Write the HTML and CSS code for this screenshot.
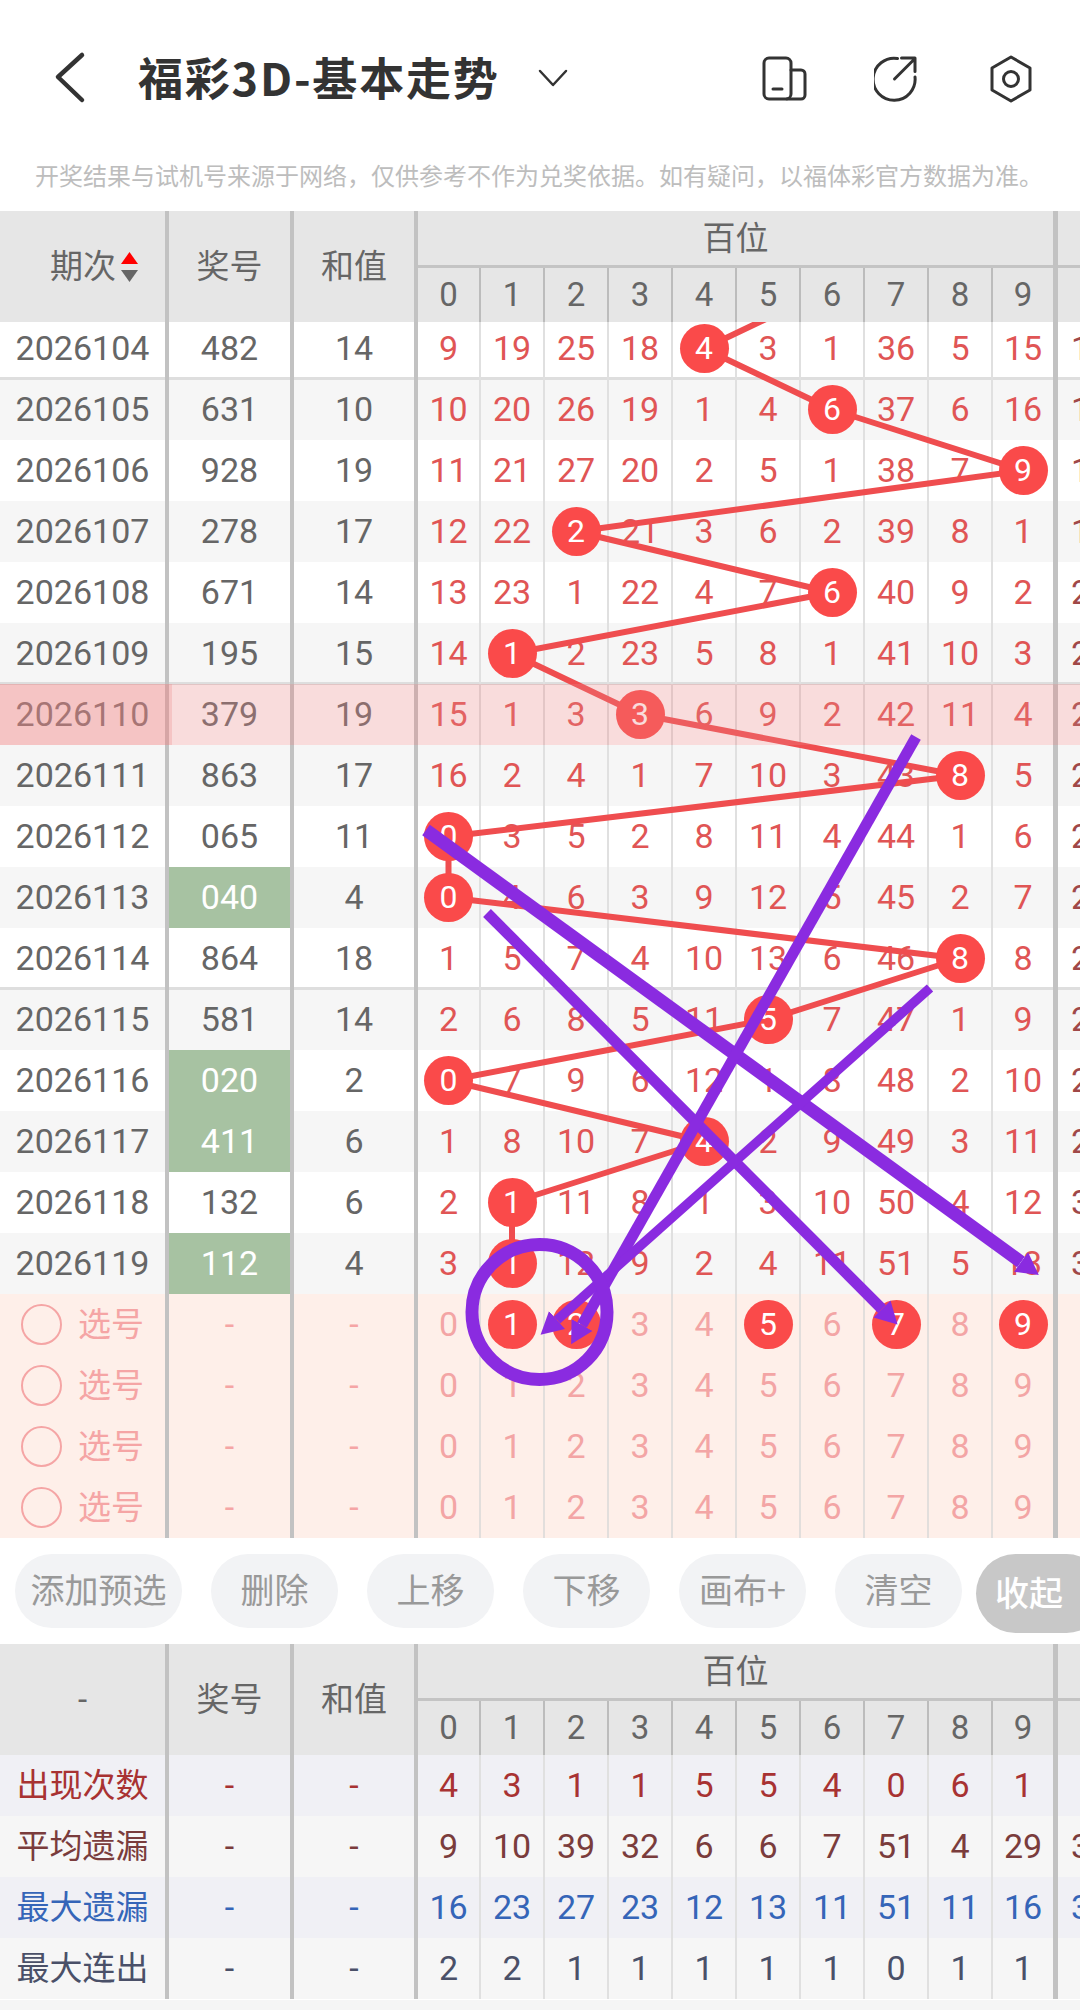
FILE: index.html
```html
<!DOCTYPE html>
<html lang="zh-CN">
<head>
<meta charset="utf-8">
<title>福彩3D-基本走势</title>
<link rel="stylesheet" href="styles.css">
</head>
<body>
<div class="page">
  <header class="topbar">
    <svg class="icon-back" viewBox="0 0 40 60" width="40" height="60"><path d="M32 7 8 29l24 23"/></svg>
    <h1 class="title">福彩3D-基本走势</h1>
    <svg class="icon-down" viewBox="0 0 30 20" width="30" height="20"><path d="M2 3l13 14L28 3"/></svg>
    <div class="actions">
      <svg class="icon" viewBox="0 0 48 48" width="48" height="48"><rect x="3" y="3" width="27" height="41" rx="5"/><path d="M30 15h10a4 4 0 0 1 4 4v21a4 4 0 0 1-4 4H26"/><path d="M12 34h9"/></svg>
      <svg class="icon" viewBox="0 0 48 48" width="48" height="48"><path d="M23.500 3.500A21 21 0 1 0 41 22"/><path d="M20.500 24 40.500 4M27.500 3H41v13.500"/></svg>
      <svg class="icon" viewBox="0 0 48 48" width="48" height="48"><path d="M24 2 43 13v22L24 46 5 35V13z"/><circle cx="24" cy="24" r="7.500"/></svg>
    </div>
  </header>
  <p class="notice">开奖结果与试机号来源于网络，仅供参考不作为兑奖依据。如有疑问，以福体彩官方数据为准。</p>

  <div class="thead thead-top">
    <div class="th th1 th-sort"><span class="th-label">期次</span><svg class="sort" viewBox="0 0 17 30" width="17" height="30"><path class="sort-up" d="M8.500 0 17 12H0z"/><path class="sort-down" d="M0 18h17l-8.500 12z"/></svg></div>
    <div class="th th2">奖号</div>
    <div class="th th3">和值</div>
    <div class="group">
      <div class="group-title">百位</div>
      <div class="group-digits"><span>0</span><span>1</span><span>2</span><span>3</span><span>4</span><span>5</span><span>6</span><span>7</span><span>8</span><span>9</span></div>
    </div>
    <div class="group group-next">
      <div class="group-title"></div>
      <div class="group-digits"><span>0</span></div>
    </div>
  </div>

  <div class="tbody">
    <div class="row row-first row-sep"><span class="c c1">2026104</span><span class="c c2">482</span><span class="c c3">14</span><span class="d">9</span><span class="d">19</span><span class="d">25</span><span class="d">18</span><span class="d"><b class="ball">4</b></span><span class="d">3</span><span class="d">1</span><span class="d">36</span><span class="d">5</span><span class="d end">15</span><span class="d nx">16</span></div>
    <div class="row alt"><span class="c c1">2026105</span><span class="c c2">631</span><span class="c c3">10</span><span class="d">10</span><span class="d">20</span><span class="d">26</span><span class="d">19</span><span class="d">1</span><span class="d">4</span><span class="d"><b class="ball">6</b></span><span class="d">37</span><span class="d">6</span><span class="d end">16</span><span class="d nx">17</span></div>
    <div class="row"><span class="c c1">2026106</span><span class="c c2">928</span><span class="c c3">19</span><span class="d">11</span><span class="d">21</span><span class="d">27</span><span class="d">20</span><span class="d">2</span><span class="d">5</span><span class="d">1</span><span class="d">38</span><span class="d">7</span><span class="d end"><b class="ball">9</b></span><span class="d nx">18</span></div>
    <div class="row alt"><span class="c c1">2026107</span><span class="c c2">278</span><span class="c c3">17</span><span class="d">12</span><span class="d">22</span><span class="d"><b class="ball">2</b></span><span class="d">21</span><span class="d">3</span><span class="d">6</span><span class="d">2</span><span class="d">39</span><span class="d">8</span><span class="d end">1</span><span class="d nx">19</span></div>
    <div class="row"><span class="c c1">2026108</span><span class="c c2">671</span><span class="c c3">14</span><span class="d">13</span><span class="d">23</span><span class="d">1</span><span class="d">22</span><span class="d">4</span><span class="d">7</span><span class="d"><b class="ball">6</b></span><span class="d">40</span><span class="d">9</span><span class="d end">2</span><span class="d nx">20</span></div>
    <div class="row alt row-sep"><span class="c c1">2026109</span><span class="c c2">195</span><span class="c c3">15</span><span class="d">14</span><span class="d"><b class="ball">1</b></span><span class="d">2</span><span class="d">23</span><span class="d">5</span><span class="d">8</span><span class="d">1</span><span class="d">41</span><span class="d">10</span><span class="d end">3</span><span class="d nx">21</span></div>
    <div class="row row-current"><span class="c c1">2026110</span><span class="c c2">379</span><span class="c c3">19</span><span class="d">15</span><span class="d">1</span><span class="d">3</span><span class="d"><b class="ball">3</b></span><span class="d">6</span><span class="d">9</span><span class="d">2</span><span class="d">42</span><span class="d">11</span><span class="d end">4</span><span class="d nx">22</span></div>
    <div class="row alt"><span class="c c1">2026111</span><span class="c c2">863</span><span class="c c3">17</span><span class="d">16</span><span class="d">2</span><span class="d">4</span><span class="d">1</span><span class="d">7</span><span class="d">10</span><span class="d">3</span><span class="d">43</span><span class="d"><b class="ball">8</b></span><span class="d end">5</span><span class="d nx">23</span></div>
    <div class="row"><span class="c c1">2026112</span><span class="c c2">065</span><span class="c c3">11</span><span class="d"><b class="ball">0</b></span><span class="d">3</span><span class="d">5</span><span class="d">2</span><span class="d">8</span><span class="d">11</span><span class="d">4</span><span class="d">44</span><span class="d">1</span><span class="d end">6</span><span class="d nx">24</span></div>
    <div class="row alt"><span class="c c1">2026113</span><span class="c c2 hit">040</span><span class="c c3">4</span><span class="d"><b class="ball">0</b></span><span class="d">4</span><span class="d">6</span><span class="d">3</span><span class="d">9</span><span class="d">12</span><span class="d">5</span><span class="d">45</span><span class="d">2</span><span class="d end">7</span><span class="d nx">25</span></div>
    <div class="row row-sep"><span class="c c1">2026114</span><span class="c c2">864</span><span class="c c3">18</span><span class="d">1</span><span class="d">5</span><span class="d">7</span><span class="d">4</span><span class="d">10</span><span class="d">13</span><span class="d">6</span><span class="d">46</span><span class="d"><b class="ball">8</b></span><span class="d end">8</span><span class="d nx">26</span></div>
    <div class="row alt"><span class="c c1">2026115</span><span class="c c2">581</span><span class="c c3">14</span><span class="d">2</span><span class="d">6</span><span class="d">8</span><span class="d">5</span><span class="d">11</span><span class="d"><b class="ball">5</b></span><span class="d">7</span><span class="d">47</span><span class="d">1</span><span class="d end">9</span><span class="d nx">27</span></div>
    <div class="row"><span class="c c1">2026116</span><span class="c c2 hit">020</span><span class="c c3">2</span><span class="d"><b class="ball">0</b></span><span class="d">7</span><span class="d">9</span><span class="d">6</span><span class="d">12</span><span class="d">1</span><span class="d">8</span><span class="d">48</span><span class="d">2</span><span class="d end">10</span><span class="d nx">28</span></div>
    <div class="row alt"><span class="c c1">2026117</span><span class="c c2 hit">411</span><span class="c c3">6</span><span class="d">1</span><span class="d">8</span><span class="d">10</span><span class="d">7</span><span class="d"><b class="ball">4</b></span><span class="d">2</span><span class="d">9</span><span class="d">49</span><span class="d">3</span><span class="d end">11</span><span class="d nx">29</span></div>
    <div class="row"><span class="c c1">2026118</span><span class="c c2">132</span><span class="c c3">6</span><span class="d">2</span><span class="d"><b class="ball">1</b></span><span class="d">11</span><span class="d">8</span><span class="d">1</span><span class="d">3</span><span class="d">10</span><span class="d">50</span><span class="d">4</span><span class="d end">12</span><span class="d nx">30</span></div>
    <div class="row alt"><span class="c c1">2026119</span><span class="c c2 hit">112</span><span class="c c3">4</span><span class="d">3</span><span class="d"><b class="ball">1</b></span><span class="d">12</span><span class="d">9</span><span class="d">2</span><span class="d">4</span><span class="d">11</span><span class="d">51</span><span class="d">5</span><span class="d end">13</span><span class="d nx">31</span></div>

    <div class="row sel"><span class="c c1 pick"><i class="radio"></i><span class="pick-label">选号</span></span><span class="c c2">-</span><span class="c c3">-</span><span class="d">0</span><span class="d"><b class="ball">1</b></span><span class="d"><b class="ball">2</b></span><span class="d">3</span><span class="d">4</span><span class="d"><b class="ball">5</b></span><span class="d">6</span><span class="d"><b class="ball">7</b></span><span class="d">8</span><span class="d end"><b class="ball">9</b></span><span class="d">0</span></div>
    <div class="row sel"><span class="c c1 pick"><i class="radio"></i><span class="pick-label">选号</span></span><span class="c c2">-</span><span class="c c3">-</span><span class="d">0</span><span class="d">1</span><span class="d">2</span><span class="d">3</span><span class="d">4</span><span class="d">5</span><span class="d">6</span><span class="d">7</span><span class="d">8</span><span class="d end">9</span><span class="d">0</span></div>
    <div class="row sel"><span class="c c1 pick"><i class="radio"></i><span class="pick-label">选号</span></span><span class="c c2">-</span><span class="c c3">-</span><span class="d">0</span><span class="d">1</span><span class="d">2</span><span class="d">3</span><span class="d">4</span><span class="d">5</span><span class="d">6</span><span class="d">7</span><span class="d">8</span><span class="d end">9</span><span class="d">0</span></div>
    <div class="row sel"><span class="c c1 pick"><i class="radio"></i><span class="pick-label">选号</span></span><span class="c c2">-</span><span class="c c3">-</span><span class="d">0</span><span class="d">1</span><span class="d">2</span><span class="d">3</span><span class="d">4</span><span class="d">5</span><span class="d">6</span><span class="d">7</span><span class="d">8</span><span class="d end">9</span><span class="d">0</span></div>
  </div>

  <div class="toolbar">
    <button class="btn btn-wide">添加预选</button>
    <button class="btn">删除</button>
    <button class="btn">上移</button>
    <button class="btn">下移</button>
    <button class="btn">画布+</button>
    <button class="btn">清空</button>
    <button class="btn btn-fold">收起</button>
  </div>

  <div class="thead">
    <div class="th th1 th-dash">-</div>
    <div class="th th2">奖号</div>
    <div class="th th3">和值</div>
    <div class="group">
      <div class="group-title">百位</div>
      <div class="group-digits"><span>0</span><span>1</span><span>2</span><span>3</span><span>4</span><span>5</span><span>6</span><span>7</span><span>8</span><span>9</span></div>
    </div>
    <div class="group group-next">
      <div class="group-title"></div>
      <div class="group-digits"><span>0</span></div>
    </div>
  </div>
  <div class="stats">
    <div class="row st st-count"><span class="c c1">出现次数</span><span class="c c2">-</span><span class="c c3">-</span><span class="d">4</span><span class="d">3</span><span class="d">1</span><span class="d">1</span><span class="d">5</span><span class="d">5</span><span class="d">4</span><span class="d">0</span><span class="d">6</span><span class="d end">1</span><span class="d">0</span></div>
    <div class="row st st-avg"><span class="c c1">平均遗漏</span><span class="c c2">-</span><span class="c c3">-</span><span class="d">9</span><span class="d">10</span><span class="d">39</span><span class="d">32</span><span class="d">6</span><span class="d">6</span><span class="d">7</span><span class="d">51</span><span class="d">4</span><span class="d end">29</span><span class="d">31</span></div>
    <div class="row st st-max"><span class="c c1">最大遗漏</span><span class="c c2">-</span><span class="c c3">-</span><span class="d">16</span><span class="d">23</span><span class="d">27</span><span class="d">23</span><span class="d">12</span><span class="d">13</span><span class="d">11</span><span class="d">51</span><span class="d">11</span><span class="d end">16</span><span class="d">31</span></div>
    <div class="row st st-run"><span class="c c1">最大连出</span><span class="c c2">-</span><span class="c c3">-</span><span class="d">2</span><span class="d">2</span><span class="d">1</span><span class="d">1</span><span class="d">1</span><span class="d">1</span><span class="d">1</span><span class="d">0</span><span class="d">1</span><span class="d end">1</span><span class="d">0</span></div>
  </div>
  <div class="foot"></div>

  <svg class="overlay trend" viewBox="0 0 1080 2010" width="1080" height="2010">
    <polyline points="832,287.500 704,348.500 832,409.500 1023,470.500 576,531.500 832,592.500 512,653.500 640,714.500 960,775.500 448.500,836.500 448.500,897.500 960,958.500 768,1019.500 448.500,1080.500 704,1141.500 512,1202.500 512,1263.500"/>
  </svg>
  <svg class="overlay ink" viewBox="0 0 1080 2010" width="1080" height="2010">
    <defs>
      <marker id="head" markerUnits="userSpaceOnUse" markerWidth="30" markerHeight="34" refX="0" refY="17" orient="auto"><path class="ink-head" d="M0 5 22 17 0 29z"/></marker>
    </defs>
    <line class="ink-a" x1="426" y1="830" x2="1021" y2="1262" marker-end="url(#head)"/>
    <line class="ink-b" x1="487" y1="913" x2="882" y2="1309" marker-end="url(#head)"/>
    <line class="ink-c" x1="916" y1="737" x2="582" y2="1325" marker-end="url(#head)"/>
    <line class="ink-d" x1="930" y1="988" x2="557" y2="1320" marker-end="url(#head)"/>
    <circle class="ink-ring" cx="539.500" cy="1312" r="67.500"/>
  </svg>
</div>
</body>
</html>
```
FILE: styles.css
```css
* { box-sizing: border-box; }
html, body { margin: 0; padding: 0; background: #fff; }
body { font-family: Roboto, "Noto Sans CJK SC", sans-serif; }

.page {
  position: relative;
  width: 1080px;
  height: 2010px;
  overflow: hidden;
  background: #fff;
}

/* top bar */
.topbar { position: relative; display: flex; align-items: center; height: 156px; }
.icon-back { margin-left: 50px; fill: none; stroke: #333; stroke-width: 4.500; stroke-linecap: round; stroke-linejoin: round; }
.title {
  margin: 0 0 0 48px;
  padding-bottom: 4px;
  font-family: "Noto Sans CJK SC", sans-serif;
  font-size: 45px;
  font-weight: 700;
  color: #333;
  letter-spacing: 1.800px;
  white-space: nowrap;
}
.icon-down { margin-left: 38px; fill: none; stroke: #333; stroke-width: 2.500; stroke-linecap: round; stroke-linejoin: round; }
.actions { position: absolute; left: 761px; top: 55px; display: flex; gap: 65px; }
.icon { fill: none; stroke: #333; stroke-width: 3; stroke-linecap: round; stroke-linejoin: round; flex: none; }

.notice {
  margin: 0;
  height: 55px;
  padding-left: 35px;
  font-family: "Noto Sans CJK SC", sans-serif;
  font-size: 24px;
  line-height: 37px;
  color: #bdbdbd;
  white-space: nowrap;
}

/* table head */
.thead { display: flex; width: 1200px; height: 111px; background: #e6e6e6; color: #666; }
.thead-top { position: relative; z-index: 4; }
.th {
  display: flex;
  flex: none;
  align-items: center;
  justify-content: center;
  padding-bottom: 5px;
  font-family: "Noto Sans CJK SC", sans-serif;
  font-size: 33px;
  border-right: 4px solid #c2c2c2;
}
.th1 { width: 169px; }
.th2 { width: 125px; }
.th3 { width: 124px; }
.th-dash { font-family: Roboto, sans-serif; padding-bottom: 0; }
.th-sort { justify-content: flex-start; padding-left: 50px; padding-bottom: 0; gap: 5px; }
.th-label { padding-bottom: 5px; white-space: nowrap; }
.sort { flex: none; }
.sort-up { fill: #f00; }
.sort-down { fill: #666; }
.group { flex: none; width: 640px; border-right: 5px solid #c2c2c2; }
.group-next { width: 300px; border-right: 0; }
.group-title {
  height: 57px;
  padding-bottom: 5px;
  border-bottom: 3px solid #c4c4c4;
  display: flex;
  align-items: center;
  justify-content: center;
  font-family: "Noto Sans CJK SC", sans-serif;
  font-size: 33px;
}
.group-digits { display: grid; grid-template-columns: 63px repeat(8, 64px) 60px; height: 54px; }
.group-digits span {
  display: flex;
  align-items: center;
  justify-content: center;
  padding-bottom: 2px;
  font-size: 33px;
  border-right: 2px solid #bcbcbc;
}
.group-digits span:last-child { border-right: 0; }
.group-next .group-digits { grid-template-columns: 64px; }

/* table rows */
.tbody { overflow: hidden; }
.row {
  display: grid;
  grid-template-columns: 169px 125px 124px 63px repeat(8, 64px) 65px 64px;
  width: 1122px;
  height: 61px;
  font-size: 34px;
}
.row-first { margin-top: -4px; }
.alt { background: #f6f6f6; }
.row-sep { box-shadow: inset 0 -2px #dedede; }
.row-sep + .row { box-shadow: inset 0 1px #dedede; }
.c, .d { display: flex; align-items: center; justify-content: center; padding-bottom: 2px; }
.c { color: #666; border-right: 4px solid #c2c2c2; }
.d { color: #e05555; border-right: 2px solid #e0e0e0; }
.d.end { border-right: 5px solid #c2c2c2; }
.d:last-child { border-right: 0; }
.d.nx { color: #a04848; }
.hit { background: #a7c2a2; color: #fff; }

.ball {
  position: relative;
  z-index: 2;
  display: flex;
  align-items: center;
  justify-content: center;
  width: 49px;
  height: 49px;
  margin-bottom: -2px;
  flex: none;
  padding-bottom: 1px;
  border-radius: 50%;
  background: #fa4a4a;
  color: #fff;
  font-size: 32px;
  font-weight: 400;
}

/* highlighted row */
.row-current { position: relative; }
.row-current::after {
  content: "";
  position: absolute;
  left: 0;
  top: 0;
  width: 1080px;
  height: 61px;
  z-index: 3;
  background: rgba(235, 135, 135, 0.29);
}
.row-current::before {
  content: "";
  position: absolute;
  left: 0;
  top: 0;
  width: 172px;
  height: 61px;
  z-index: 3;
  background: rgba(238, 135, 135, 0.28);
}

/* pick rows */
.sel { background: #feefe9; }
.sel .c { color: #f5a5a5; }
.sel .d { color: #f3a5a5; border-right-color: #e2dedc; }
.sel .d.end { border-right-color: #c2c2c2; }
.pick {
  justify-content: flex-start;
  padding-left: 21px;
  padding-bottom: 0;
  gap: 16px;
  font-family: "Noto Sans CJK SC", sans-serif;
  font-size: 33px;
}
.pick-label { padding-bottom: 5px; white-space: nowrap; }
.radio { width: 41px; height: 41px; border: 2.500px solid #f5a5a5; border-radius: 50%; flex: none; }

/* tool bar */
.toolbar { display: flex; gap: 29px; align-items: flex-start; height: 106px; padding: 16px 0 0 15px; }
.btn {
  flex: none;
  width: 127px;
  height: 74px;
  padding: 0 0 6px;
  border: 0;
  border-radius: 37px;
  background: #f2f3f5;
  color: #999;
  font-family: "Noto Sans CJK SC", sans-serif;
  font-size: 34px;
  white-space: nowrap;
}
.btn-wide { width: 167px; }
.btn-fold {
  width: 130px;
  height: 79px;
  margin-left: -15px;
  padding: 0 0 5px 19px;
  text-align: left;
  border-radius: 40px;
  background: #c8c8c8;
  color: #fff;
  font-weight: 500;
}

/* stats */
.st .c1 { padding-bottom: 6px; font-family: "Noto Sans CJK SC", sans-serif; font-size: 33px; white-space: nowrap; }
.st-count, .st-max { background: #f0f0f5; }
.st-avg, .st-run { background: #f6f6f6; }
.st-count .c, .st-count .d { color: #a83232; }
.st-avg .c, .st-avg .d { color: #7a3c3c; }
.st-max .c, .st-max .d { color: #3565b8; }
.st-run .c, .st-run .d { color: #4a5068; }
.st .c { border-right-color: #c2c2c2; }
.foot { height: 11px; background: #f5f5f5; border-top: 1px solid #fff; }

/* drawn layers */
.overlay { position: absolute; left: 0; top: 0; pointer-events: none; }
.trend { z-index: 1; }
.trend polyline { fill: none; stroke: #ef4d4f; stroke-width: 6; stroke-linejoin: round; }
.ink { z-index: 5; }
.ink-a { stroke: #8a2be0; stroke-width: 13; }
.ink-b { stroke: #8a2be0; stroke-width: 11; }
.ink-c { stroke: #8a2be0; stroke-width: 11; }
.ink-d { stroke: #8a2be0; stroke-width: 9.500; }
.ink-ring { fill: none; stroke: #8a2be0; stroke-width: 13; }
.ink-head { fill: #8a2be0; }
```
